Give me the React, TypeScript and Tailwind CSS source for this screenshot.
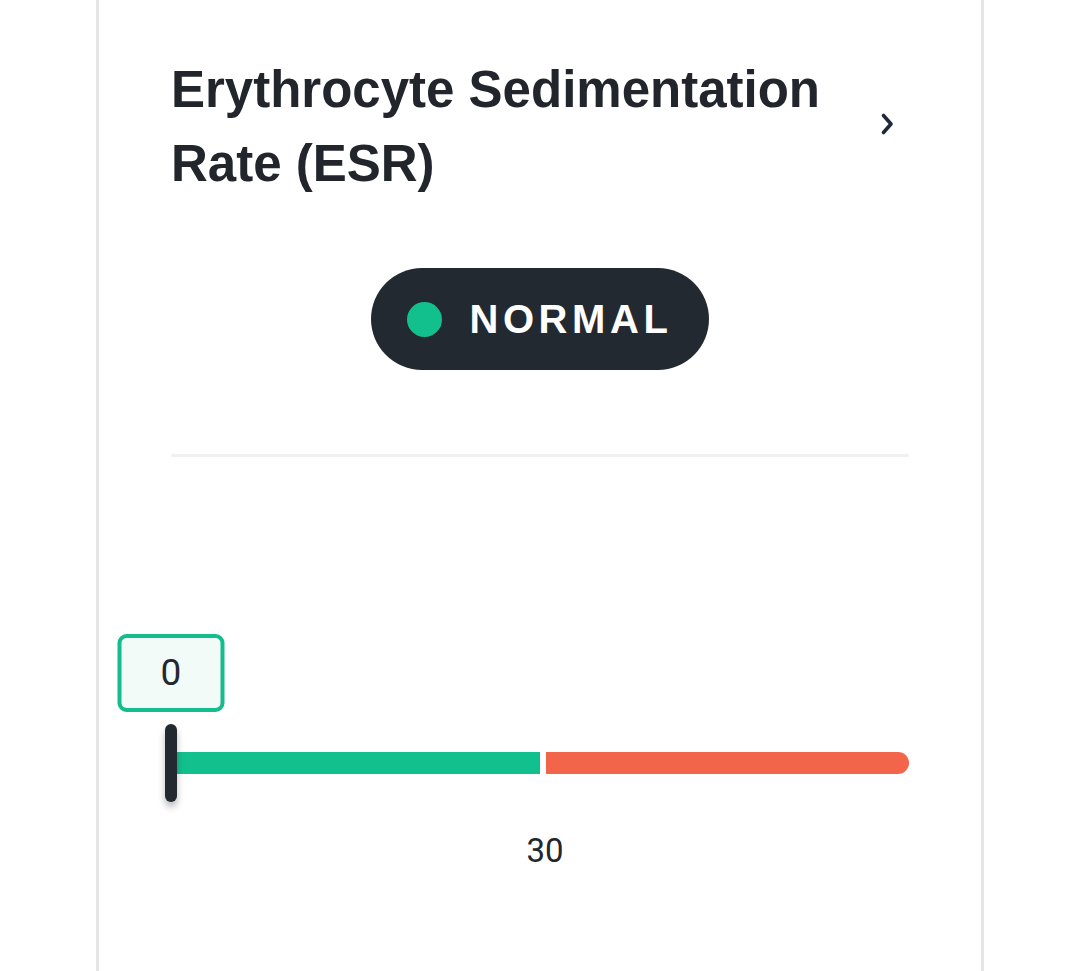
import React from 'react';

const ResultCard: React.FC = () => {
  const min = 0;
  const max = 60;
  const value = 0;
  const threshold = 30;

  return (
    <div className="w-[888px] min-h-[971px] border-x-[3px] border-[#e6e6e6] bg-white px-[72px] pt-[53px] font-['Liberation_Sans',Arial,sans-serif]">
      <div className="flex items-center justify-between">
        <h1 className="max-w-[690px] text-[51px] leading-[74px] font-bold text-[#22262c]">
          Erythrocyte Sedimentation Rate (ESR)
        </h1>
        <svg width="14" height="24" viewBox="0 0 14 24" className="mr-[15px] mt-[-6px]" fill="none">
          <path d="M3.5 3.5 L11 12 L3.5 20.5" stroke="#1f2937" strokeWidth="3.6" strokeLinecap="round" strokeLinejoin="round" />
        </svg>
      </div>

      <div className="mt-[67px] flex justify-center">
        <div className="flex h-[102px] items-center gap-[27px] rounded-full bg-[#232931] pl-[36px] pr-[36px]">
          <span className="h-[35px] w-[35px] rounded-full bg-[#12c08e]" />
          <span className="text-[40px] font-bold leading-none tracking-[0.115em] text-white">NORMAL</span>
        </div>
      </div>

      <div className="mt-[84px] h-[3px] rounded-full bg-[#f0f0f0]" />

      <div className="relative mt-[177px] pt-[118px] font-['Roboto',sans-serif]">
        <div
          className="absolute top-0 flex h-[78px] w-[107px] -translate-x-1/2 items-center justify-center rounded-[9px] border-4 border-[#14bd8c] bg-[#f3fbf8] text-[37px] font-normal text-[#232931]"
          style={{ left: `${((value - min) / (max - min)) * 100}%` }}
        >
          {value}
        </div>
        <div className="flex h-[22px] gap-[6px]">
          <div className="h-full w-[369px] bg-[#12c08e]" />
          <div className="h-full flex-1 rounded-r-full bg-[#f2654b]" />
        </div>
        <div
          className="absolute top-[90px] h-[78px] w-3 -translate-x-1/2 rounded-full bg-[#232931] shadow-[0_5px_7px_rgba(0,0,0,0.28)]"
          style={{ left: `${((value - min) / (max - min)) * 100}%` }}
        />
        <div className="mt-[57px] ml-[374px] w-fit -translate-x-1/2 text-[33px] leading-[40px] text-[#22262c]">
          {threshold}
        </div>
      </div>
    </div>
  );
};

export default function App() {
  return (
    <div className="flex min-h-screen justify-center overflow-hidden bg-white">
      <ResultCard />
    </div>
  );
}
